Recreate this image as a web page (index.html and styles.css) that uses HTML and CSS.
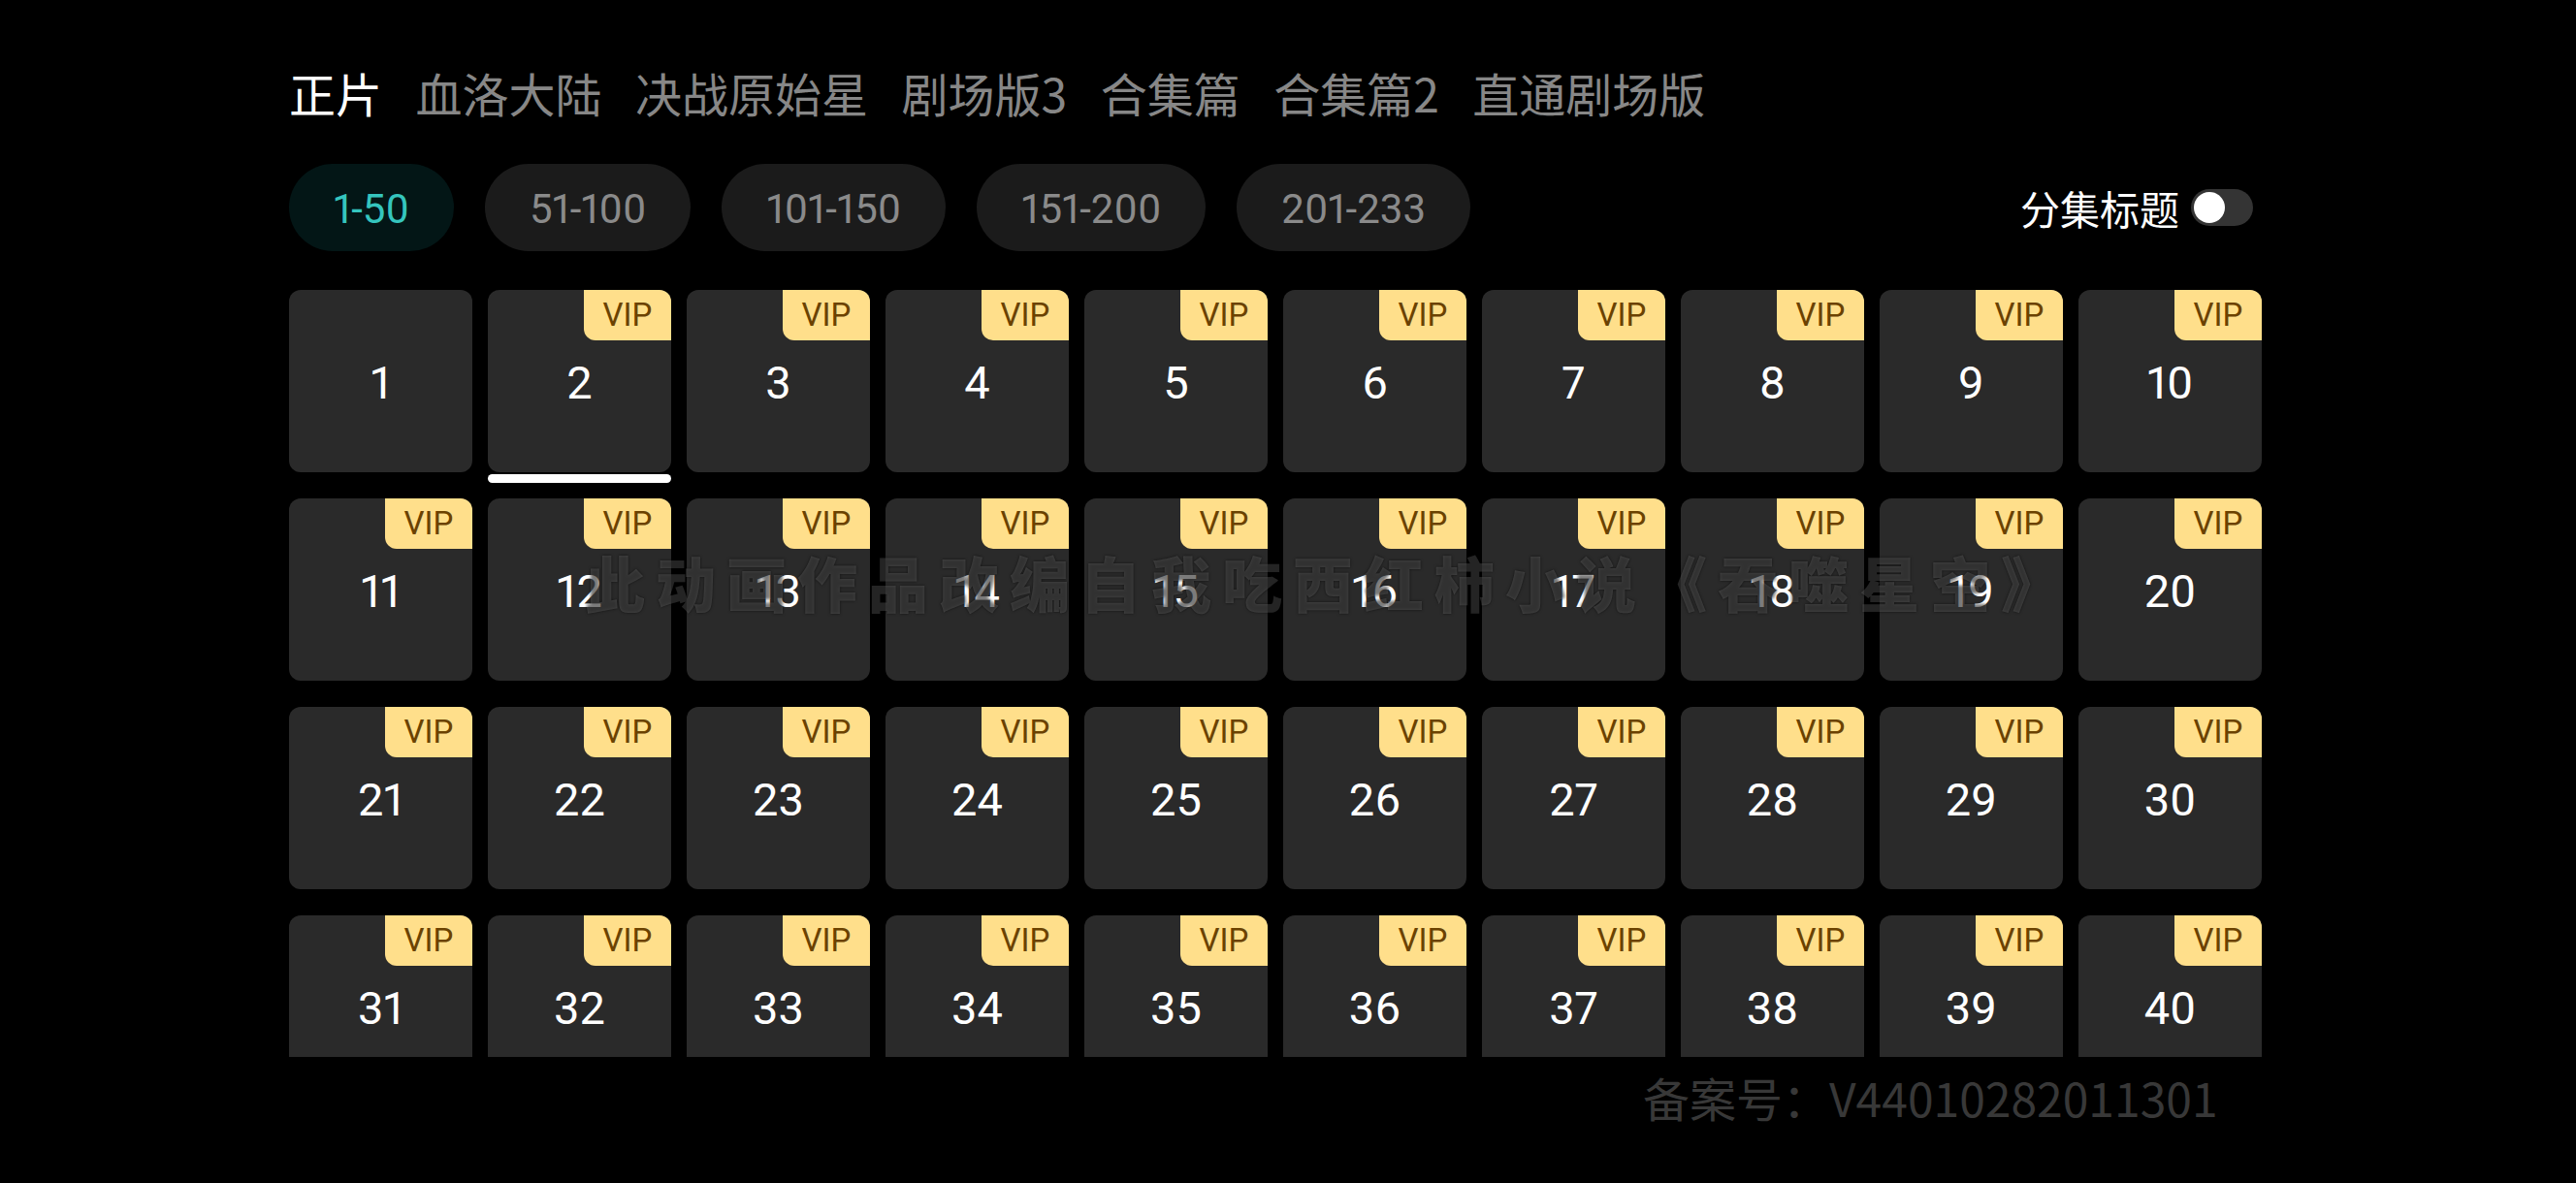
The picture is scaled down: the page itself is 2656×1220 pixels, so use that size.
FILE: index.html
```html
<!DOCTYPE html>
<html lang="zh-CN">
<head>
<meta charset="utf-8">
<title>选集</title>
<link rel="stylesheet" href="styles.css">
</head>
<body>
<div class="page">
  <nav class="tabs">
    <span class="tab active">正片</span>
    <span class="tab">血洛大陆</span>
    <span class="tab">决战原始星</span>
    <span class="tab">剧场版3</span>
    <span class="tab">合集篇</span>
    <span class="tab">合集篇2</span>
    <span class="tab">直通剧场版</span>
  </nav>

  <div class="range-row">
    <div class="ranges">
      <span class="range active">1-50</span>
      <span class="range">51-100</span>
      <span class="range">101-150</span>
      <span class="range">151-200</span>
      <span class="range">201-233</span>
    </div>
    <div class="title-toggle">
      <span class="toggle-label">分集标题</span>
      <span class="switch"><span class="knob"></span></span>
    </div>
  </div>

  <div class="grid-wrap">
    <div class="grid">
      <div class="ep">1</div>
      <div class="ep current vip">2</div>
      <div class="ep vip">3</div>
      <div class="ep vip">4</div>
      <div class="ep vip">5</div>
      <div class="ep vip">6</div>
      <div class="ep vip">7</div>
      <div class="ep vip">8</div>
      <div class="ep vip">9</div>
      <div class="ep vip">10</div>
      <div class="ep vip">11</div>
      <div class="ep vip">12</div>
      <div class="ep vip">13</div>
      <div class="ep vip">14</div>
      <div class="ep vip">15</div>
      <div class="ep vip">16</div>
      <div class="ep vip">17</div>
      <div class="ep vip">18</div>
      <div class="ep vip">19</div>
      <div class="ep vip">20</div>
      <div class="ep vip">21</div>
      <div class="ep vip">22</div>
      <div class="ep vip">23</div>
      <div class="ep vip">24</div>
      <div class="ep vip">25</div>
      <div class="ep vip">26</div>
      <div class="ep vip">27</div>
      <div class="ep vip">28</div>
      <div class="ep vip">29</div>
      <div class="ep vip">30</div>
      <div class="ep vip">31</div>
      <div class="ep vip">32</div>
      <div class="ep vip">33</div>
      <div class="ep vip">34</div>
      <div class="ep vip">35</div>
      <div class="ep vip">36</div>
      <div class="ep vip">37</div>
      <div class="ep vip">38</div>
      <div class="ep vip">39</div>
      <div class="ep vip">40</div>
      <div class="ep vip">41</div>
      <div class="ep vip">42</div>
      <div class="ep vip">43</div>
      <div class="ep vip">44</div>
      <div class="ep vip">45</div>
      <div class="ep vip">46</div>
      <div class="ep vip">47</div>
      <div class="ep vip">48</div>
      <div class="ep vip">49</div>
      <div class="ep vip">50</div>
    </div>
  </div>
</div>

<div class="watermark">此动画作品改编自我吃西红柿小说《吞噬星空》</div>
<div class="license">备案号：V44010282011301</div>
</body>
</html>
```

FILE: styles.css
```css
* { box-sizing: border-box; }

html, body {
  margin: 0;
  padding: 0;
  background: #000;
}

body {
  width: 2656px;
  height: 1220px;
  overflow: hidden;
  position: relative;
  font-family: "Roboto", "Noto Sans CJK SC", sans-serif;
  font-variant-numeric: proportional-nums;
  color: #fff;
}

.page {
  padding: 64px 0 0 298px;
  width: 2332px;
}

/* top tabs */
.tabs {
  display: flex;
  gap: 34.5px;
  height: 63px;
  align-items: center;
  font-family: "Noto Sans CJK SC", sans-serif;
  font-size: 48px;
  line-height: 63px;
}

.tab { color: #878787; white-space: nowrap; }
.tab.active { color: #fff; }

/* ranges row */
.range-row {
  margin-top: 42px;
  display: flex;
  align-items: center;
  justify-content: space-between;
}

.ranges {
  display: flex;
  gap: 32px;
}

.range {
  height: 90px;
  padding: 2px 46px 0;
  border-radius: 45px;
  background: #1b1b1b;
  color: #8a8a8a;
  font-size: 42px;
  display: flex;
  align-items: center;
  justify-content: center;
  white-space: nowrap;
}

.range.active {
  background: #031616;
  color: #35c5be;
}

.title-toggle {
  display: flex;
  align-items: center;
  gap: 12px;
  margin-right: 9px;
}

.toggle-label {
  font-family: "Noto Sans CJK SC", sans-serif;
  font-size: 41px;
  color: #fff;
  line-height: 1;
}

.switch {
  width: 64px;
  height: 38px;
  border-radius: 19px;
  background: #343434;
  display: flex;
  align-items: center;
  padding-left: 3px;
}

.knob {
  width: 32px;
  height: 32px;
  border-radius: 50%;
  background: #fff;
}

/* episode grid */
.grid-wrap {
  margin-top: 40px;
  height: 791px;
  overflow: hidden;
}

.grid {
  display: grid;
  grid-template-columns: repeat(10, 189px);
  grid-auto-rows: 188px;
  column-gap: 16px;
  row-gap: 27px;
}

.ep {
  position: relative;
  background: #2a2a2a;
  border-radius: 12px;
  display: flex;
  align-items: center;
  justify-content: center;
  font-size: 47px;
  padding-top: 2px;
  color: #fff;
}

.ep.vip::before {
  content: "VIP";
  position: absolute;
  top: 0;
  right: 0;
  width: 90px;
  height: 52px;
  background: #ffdf8b;
  color: #6b4200;
  border-radius: 0 12px 0 12px;
  font-size: 33px;
  line-height: 52px;
  text-align: center;
}

.ep.current::after {
  content: "";
  position: absolute;
  left: 0;
  right: 0;
  top: calc(100% + 2px);
  height: 9px;
  border-radius: 5px;
  background: #fff;
}

/* video overlays */
.watermark {
  position: absolute;
  left: 603px;
  top: 560px;
  font-family: "Noto Sans CJK SC", sans-serif;
  font-weight: 900;
  font-size: 62px;
  letter-spacing: 11px;
  line-height: 80px;
  color: rgba(255, 255, 255, 0.14);
  text-shadow: 0 0 3px rgba(0, 0, 0, 0.6);
  white-space: nowrap;
}

.license {
  position: absolute;
  left: 1694px;
  top: 1096px;
  font-family: "Noto Sans CJK SC", sans-serif;
  font-size: 48px;
  line-height: 70px;
  color: #383838;
  white-space: nowrap;
}
```
